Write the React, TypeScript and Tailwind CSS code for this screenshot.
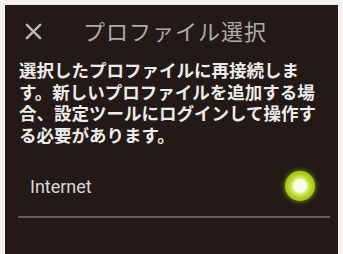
export default function App() {
  return (
    <div className="h-[254px] w-[343px] overflow-hidden bg-[#f3f2f0] pl-[5px] pr-[5px] pt-[5px]">
      <div className="flex h-full flex-col bg-[#231a17] font-['Noto_Sans_CJK_JP',sans-serif]">
        <header className="flex h-[50px] items-center">
          <svg viewBox="0 0 20 20" className="ml-[19px] mt-[3px] h-[19px] w-[19px]">
            <path d="M3 3 L17 17 M17 3 L3 17" stroke="#b9b9b7" strokeWidth="2.6" strokeLinecap="round" />
          </svg>
          <h1 className="ml-[40px] text-[22px] leading-none tracking-[1px] text-[#acacaa]">
            プロファイル選択
          </h1>
        </header>

        <div className="ml-[14px] mt-[4px] flex flex-col text-[17.5px] font-bold leading-[21.5px] text-[#ececea]">
          <span>選択したプロファイルに再接続しま</span>
          <span>す。新しいプロファイルを追加する場</span>
          <span>合、設定ツールにログインして操作す</span>
          <span>る必要があります。</span>
        </div>

        <div className="mt-[19px] flex h-[44px] items-center justify-between pl-[25px] pr-[23px]">
          <span className="font-['Roboto',sans-serif] text-[18px] text-[#d8d8d6]">Internet</span>
          <span className="flex h-[30px] w-[30px] items-center justify-center rounded-full bg-[#a9cc14] shadow-[0_0_5px_#8fb010]">
            <span className="h-[14px] w-[14px] rounded-full bg-[#fbfde8] shadow-[0_0_4px_3px_#e6f590]" />
          </span>
        </div>

        <div className="ml-[13px] mr-[8px] mt-[8px] h-[2px] bg-[#675c58]" />
      </div>
    </div>
  );
}
